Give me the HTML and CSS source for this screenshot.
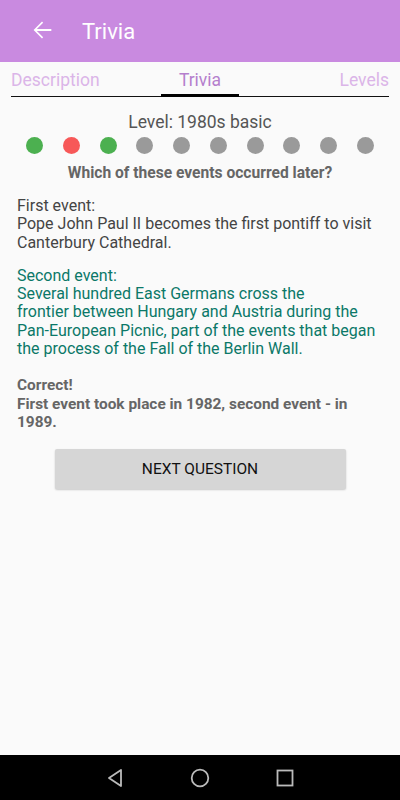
FILE: index.html
```html
<!DOCTYPE html>
<html>
<head>
<meta charset="utf-8">
<link rel="stylesheet" href="styles.css">
</head>
<body>
<div class="screen">
  <header class="appbar">
    <svg class="back" width="28" height="28" viewBox="0 0 24 24"><path d="M20 11.2H7.6l5.4-5.4-1-1L4.8 12l7.2 7.2 1-1-5.4-5.4H20z" fill="#fff"/></svg>
    <span class="title">Trivia</span>
  </header>
  <nav class="tabs">
    <span class="tab tab-left">Description</span>
    <span class="tab tab-active">Trivia</span>
    <span class="tab tab-right">Levels</span>
  </nav>
  <main class="content">
    <div class="level">Level: 1980s basic</div>
    <div class="dots">
      <span class="dot green"></span><span class="dot red"></span><span class="dot green"></span><span class="dot"></span><span class="dot"></span><span class="dot"></span><span class="dot"></span><span class="dot"></span><span class="dot"></span><span class="dot"></span>
    </div>
    <div class="question">Which of these events occurred later?</div>
    <p class="event first">First event:<br>Pope John Paul II becomes the first pontiff to visit Canterbury Cathedral.</p>
    <p class="event second">Second event:<br>Several hundred East Germans cross the<br>frontier between Hungary and Austria during the Pan-European Picnic, part of the events that began the process of the Fall of the Berlin Wall.</p>
    <p class="result">Correct!<br>First event took place in 1982, second event - in 1989.</p>
    <div class="btnwrap"><button class="next">NEXT QUESTION</button></div>
  </main>
  <footer class="navbar">
    <svg width="20" height="20" viewBox="0 0 20 20"><path d="M16 2 L4 10 L16 18 Z" fill="none" stroke="#bbb" stroke-width="1.8" stroke-linejoin="round"/></svg>
    <svg width="20" height="20" viewBox="0 0 20 20"><circle cx="10" cy="10" r="8.3" fill="none" stroke="#bbb" stroke-width="1.8"/></svg>
    <svg width="20" height="20" viewBox="0 0 20 20"><rect x="2.5" y="2.5" width="15" height="15" fill="none" stroke="#bbb" stroke-width="1.8"/></svg>
  </footer>
</div>
</body>
</html>
```
FILE: styles.css
```css
html, body {
  margin: 0;
  padding: 0;
}
body {
  font-family: Roboto, "Liberation Sans", sans-serif;
  background: #fafafa;
}
.screen {
  width: 400px;
  height: 800px;
  display: flex;
  flex-direction: column;
}
.appbar {
  height: 62px;
  background: #c98ae0;
  display: flex;
  align-items: center;
  padding-left: 28px;
  box-sizing: border-box;
}
.back {
  margin-right: 26px;
  margin-top: -2px;
}
.title {
  color: #fff;
  font-size: 22px;
}
.tabs {
  height: 35px;
  margin: 0 11px;
  border-bottom: 1px solid #111;
  display: flex;
  align-items: center;
  box-sizing: border-box;
  font-size: 17.5px;
}
.tab {
  flex: 1;
  color: #dbb5e8;
}
.tab-right {
  text-align: right;
}
.tab-active {
  color: #b57fcd;
  align-self: stretch;
  display: flex;
  align-items: center;
  justify-content: center;
  flex: 0 0 78px;
  border-bottom: 3px solid #000;
  margin-bottom: -1px;
  padding-top: 3px;
  box-sizing: border-box;
}
.tab-left, .tab-right {
  padding-top: 1px;
}
.content {
  flex: 1;
  padding: 0 17px;
}
.level {
  text-align: center;
  font-size: 17.5px;
  color: #555;
  margin-top: 15px;
  line-height: 21px;
}
.dots {
  display: flex;
  justify-content: space-between;
  padding: 0 9px;
  margin-top: 4px;
}
.dot {
  width: 17px;
  height: 17px;
  border-radius: 50%;
  background: #9a9a9a;
}
.dot.green { background: #4cb050; }
.dot.red { background: #f75858; }
.question {
  text-align: center;
  font-weight: bold;
  color: #666;
  font-size: 15.6px;
  margin-top: 10px;
  line-height: 18px;
}
.event, .result {
  font-size: 16px;
  line-height: 18.3px;
  margin: 0;
}
.first {
  color: #444;
  margin-top: 15px;
}
.second {
  color: #0b7868;
  margin-top: 15px;
}
.result {
  color: #666;
  font-weight: bold;
  font-size: 15.4px;
  margin-top: 18px;
}
.btnwrap {
  display: flex;
  justify-content: center;
  margin-top: 18px;
}
.next {
  width: 291px;
  height: 40px;
  background: #d6d6d6;
  border: none;
  border-radius: 2px;
  box-shadow: 0 1px 2px rgba(0,0,0,0.2);
  font-family: Roboto, "Liberation Sans", sans-serif;
  font-size: 15.5px;
  font-weight: 400;
  color: #111;
}
.navbar {
  height: 45px;
  background: #000;
  display: flex;
  justify-content: center;
  align-items: center;
  gap: 65px;
}
```
